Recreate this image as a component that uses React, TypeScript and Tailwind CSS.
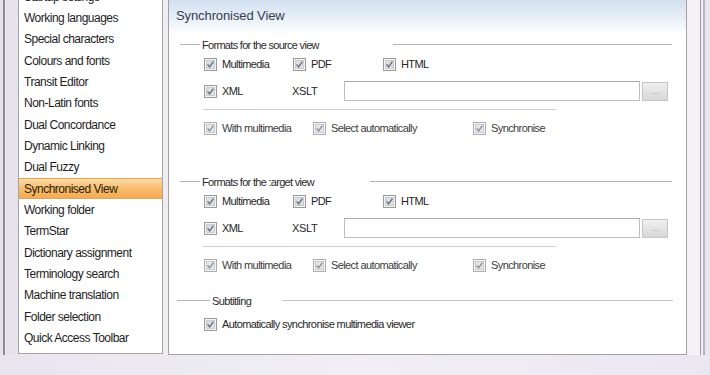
import React from 'react'

const navItems = [
  'Startup settings',
  'Working languages',
  'Special characters',
  'Colours and fonts',
  'Transit Editor',
  'Non-Latin fonts',
  'Dual Concordance',
  'Dynamic Linking',
  'Dual Fuzzy',
  'Synchronised View',
  'Working folder',
  'TermStar',
  'Dictionary assignment',
  'Terminology search',
  'Machine translation',
  'Folder selection',
  'Quick Access Toolbar',
]

const CheckBox = ({ dim = false }: { dim?: boolean }) => (
  <svg width="13" height="13" viewBox="0 0 13 13" className="shrink-0">
    <rect x="0.5" y="0.5" width="12" height="12" fill="#f4f4f4" stroke={dim ? '#aeaeae' : '#9a9a9a'} />
    <rect x="2.5" y="2.5" width="8" height="8" fill={dim ? '#e6e6e6' : '#dfdfdf'} stroke="#cbcbcb" />
    <path d="M3.6 6.4 L5.6 8.9 L9.4 3.6" fill="none" stroke={dim ? '#8290a6' : '#5f6f8c'} strokeWidth="1.4" />
  </svg>
)

const Option = ({ label, width, dim = false }: { label: string; width: string; dim?: boolean }) => (
  <div className={`flex items-center gap-[5px] ${width}`}>
    <CheckBox dim={dim} />
    <span className={`text-[11px] tracking-[-0.6px] whitespace-nowrap ${dim ? 'text-[#3c3c3c]' : 'text-[#262626]'}`}>{label}</span>
  </div>
)

const GroupHeader = ({ label, lineStart, labelWidth, lineWidth }: { label: string; lineStart: string; labelWidth: string; lineWidth: string }) => (
  <div className="flex items-center h-[18px]">
    <div className={`h-px bg-[#b4b4b4] ${lineStart}`} />
    <div className={`pl-[2px] ${labelWidth}`}>
      <span className="text-[11px] tracking-[-0.7px] text-[#2a2a2a] whitespace-nowrap">{label}</span>
    </div>
    <div className={`h-px bg-[#b4b4b4] ${lineWidth}`} />
  </div>
)

const FormatsGroup = ({ label, labelWidth, lineWidth, gapTop }: { label: string; labelWidth: string; lineWidth: string; gapTop: string }) => (
  <div className="flex flex-col">
    <div className={gapTop}>
      <GroupHeader label={label} lineStart="ml-[11px] w-[20px]" labelWidth={labelWidth} lineWidth={lineWidth} />
    </div>
    {/* first row */}
    <div className="flex items-center h-[20px] pl-[35px] mt-[1px]">
      <Option label="Multimedia" width="w-[89px]" />
      <Option label="PDF" width="w-[90px]" />
      <Option label="HTML" width="w-[90px]" />
    </div>
    {/* xml / xslt row */}
    <div className="flex items-center h-[20px] pl-[35px] mt-[7px]">
      <Option label="XML" width="w-[88px]" />
      <span className="w-[52px] text-[11px] tracking-[-0.3px] text-[#262626]">XSLT</span>
      <div className="w-[296px] h-[20px] border border-[#bdbdbd] border-t-[#a9a9a9] bg-white" />
      <div className="ml-[2px] w-[26px] h-[19px] border border-[#c6c6c6] bg-gradient-to-b from-[#f0f0f0] to-[#d7d7d7] flex items-center justify-center">
        <span className="text-[7px] leading-none text-[#a2a2a2] tracking-[-0.5px]">.....</span>
      </div>
    </div>
    <div className="ml-[34px] w-[353px] h-px bg-[#cfcfcf] mt-[8px]" />
    <div className="flex items-center h-[20px] pl-[35px] mt-[8px]">
      <Option label="With multimedia" width="w-[109px]" dim />
      <Option label="Select automatically" width="w-[160px]" dim />
      <Option label="Synchronise" width="w-[100px]" dim />
    </div>
  </div>
)

export default function App() {
  return (
    <div className="w-[710px] h-[375px] overflow-hidden bg-[#ebe8f0] flex flex-col font-['Liberation_Sans',Arial,sans-serif]">
      <div className="flex h-[355px]">
        {/* left frame edge */}
        <div className="w-[18px] flex">
          <div className="w-[3px] bg-[#e6e2eb]" />
          <div className="w-[2px] bg-[#8f8b96]" />
          <div className="w-[1px] bg-[#f3f1f6]" />
          <div className="flex-1 bg-[#e7e3ed]" />
        </div>

        {/* category list */}
        <div className="w-[145px] h-[354px] bg-white border-x border-b border-[#a4a4a4] overflow-hidden">
          <div className="flex flex-col -mt-[14px]">
            {navItems.map((item) => {
              const active = item === 'Synchronised View'
              return (
                <div
                  key={item}
                  className={`h-[21.33px] flex items-center pl-[5px] text-[12px] tracking-[-0.5px] whitespace-nowrap ${
                    active
                      ? 'bg-gradient-to-b from-[#fcdcaa] via-[#f8bc6c] to-[#f4aa55] text-[#2b1d08] border-y border-[#e7a552]'
                      : 'text-[#1d1d1d]'
                  }`}
                >
                  {item}
                </div>
              )
            })}
          </div>
        </div>

        <div className="w-[5px] bg-[#efedf2]" />

        {/* settings page */}
        <div className="w-[519px] h-[355px] bg-white border-x border-b border-[#a2a2a2] flex flex-col">
          <div className="h-[35px] pl-[7px] pt-[3px] bg-gradient-to-b from-[#d2e0ef] via-[#e7eff8] to-white">
            <span className="text-[13px] leading-[16px] text-[#34404e] tracking-[-0.1px]">Synchronised View</span>
          </div>

          <FormatsGroup
            label="Formats for the source view"
            labelWidth="w-[193px]"
            lineWidth="w-[279px]"
            gapTop="mt-0"
          />
          <FormatsGroup
            label="Formats for the :arget view"
            labelWidth="w-[170px]"
            lineWidth="w-[302px]"
            gapTop="mt-[34px]"
          />

          <div className="mt-[16px]">
            <div className="flex items-center h-[18px]">
              <div className="ml-[8px] w-[33px] h-px bg-[#b4b4b4]" />
              <div className="pl-[2px] w-[72px]">
                <span className="text-[11px] tracking-[-0.6px] text-[#2a2a2a]">Subtitling</span>
              </div>
              <div className="w-[391px] h-px bg-[#c4c4c4]" />
            </div>
          </div>
          <div className="flex items-center h-[20px] pl-[35px] mt-[5px]">
            <Option label="Automatically synchronise multimedia viewer" width="w-[300px]" />
          </div>
        </div>

        {/* right frame edge */}
        <div className="flex-1 flex">
          <div className="w-[13px] bg-[#f5f3f7]" />
          <div className="w-[1px] bg-[#9d99a3]" />
          <div className="w-[2px] bg-[#f1eff4]" />
          <div className="w-[2px] bg-[#bcaec8]" />
          <div className="flex-1 bg-[#e9e5ef]" />
        </div>
      </div>

      {/* bottom frame */}
      <div className="flex-1 bg-gradient-to-r from-[#e8e5ee] via-[#f1eff5] to-[#ebe7f1]" />
    </div>
  )
}
